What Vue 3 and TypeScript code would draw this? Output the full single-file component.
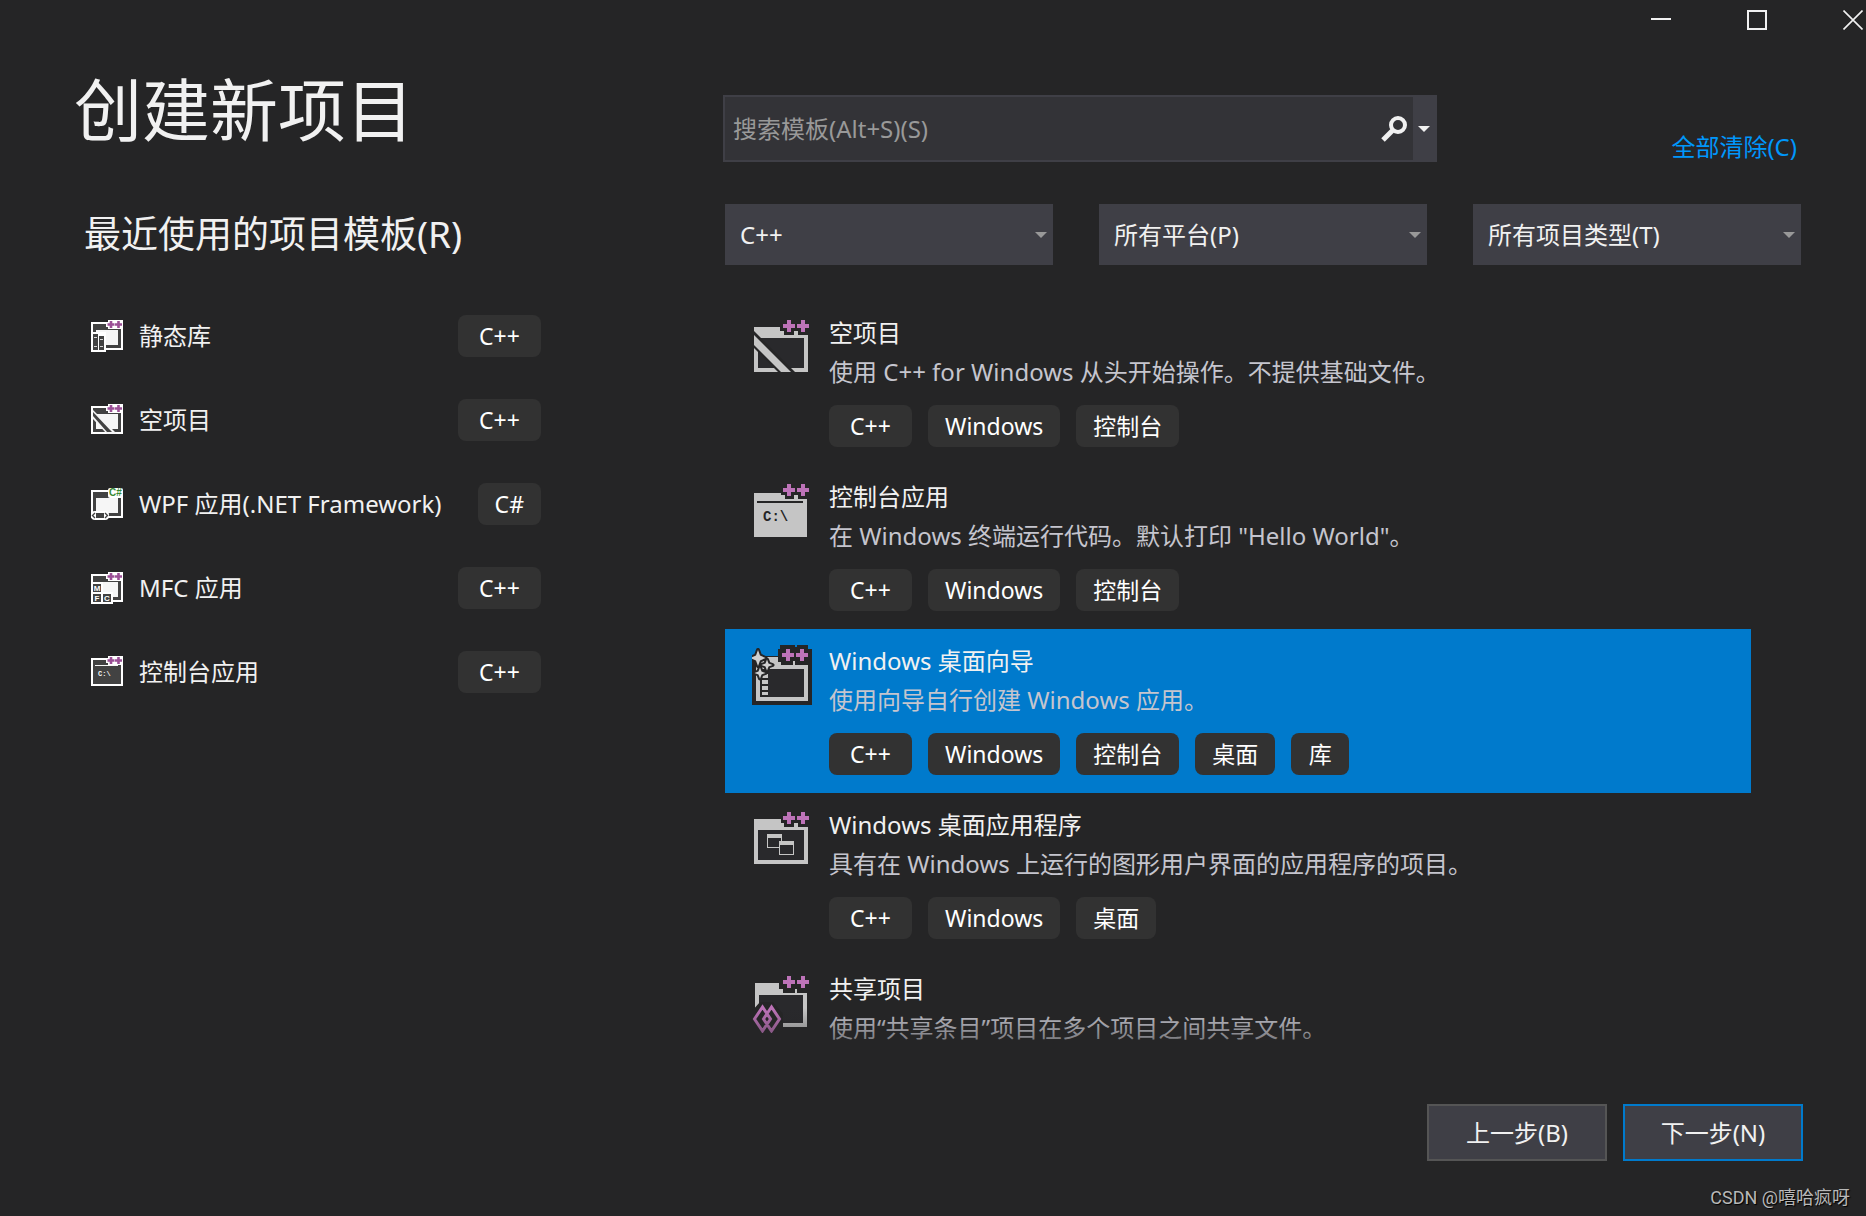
<script setup lang="ts">
import { ref } from 'vue'

interface RecentTemplate {
  name: string
  tag: string
  icon: 'library' | 'empty' | 'wpf' | 'mfc' | 'console'
}

interface ProjectTemplate {
  name: string
  description: string
  tags: string[]
  icon: 'empty' | 'console' | 'wizard' | 'desktop' | 'shared'
}

const recent: RecentTemplate[] = [
  { name: '静态库', tag: 'C++', icon: 'library' },
  { name: '空项目', tag: 'C++', icon: 'empty' },
  { name: 'WPF 应用(.NET Framework)', tag: 'C#', icon: 'wpf' },
  { name: 'MFC 应用', tag: 'C++', icon: 'mfc' },
  { name: '控制台应用', tag: 'C++', icon: 'console' },
]

const templates: ProjectTemplate[] = [
  { name: '空项目', description: '使用 C++ for Windows 从头开始操作。不提供基础文件。', tags: ['C++', 'Windows', '控制台'], icon: 'empty' },
  { name: '控制台应用', description: '在 Windows 终端运行代码。默认打印 "Hello World"。', tags: ['C++', 'Windows', '控制台'], icon: 'console' },
  { name: 'Windows 桌面向导', description: '使用向导自行创建 Windows 应用。', tags: ['C++', 'Windows', '控制台', '桌面', '库'], icon: 'wizard' },
  { name: 'Windows 桌面应用程序', description: '具有在 Windows 上运行的图形用户界面的应用程序的项目。', tags: ['C++', 'Windows', '桌面'], icon: 'desktop' },
  { name: '共享项目', description: '使用“共享条目”项目在多个项目之间共享文件。', tags: [], icon: 'shared' },
]

const filters = [
  { id: 'language', label: '语言', value: 'C++' },
  { id: 'platform', label: '平台', value: '所有平台(P)' },
  { id: 'type', label: '项目类型', value: '所有项目类型(T)' },
]

const selected = ref(2)
const query = ref('')
</script>

<template>
  <div class="window">
    <header class="titlebar">
      <button type="button" aria-label="最小化">
        <svg width="20" height="20" viewBox="0 0 20 20"><path d="M0 9H20" stroke="#f1f1f1" stroke-width="2" /></svg>
      </button>
      <button type="button" aria-label="最大化">
        <svg width="20" height="20" viewBox="0 0 20 20"><rect x="1" y="1" width="18" height="18" fill="none" stroke="#f1f1f1" stroke-width="2" /></svg>
      </button>
      <button type="button" aria-label="关闭">
        <svg width="20" height="20" viewBox="0 0 20 20"><path d="M0.5 0.5L19.5 19.5M19.5 0.5L0.5 19.5" stroke="#f1f1f1" stroke-width="1.6" /></svg>
      </button>
    </header>

    <main class="content">
      <section class="recent">
        <h1>创建新项目</h1>
        <h2>最近使用的项目模板(R)</h2>
        <ul class="recent-list">
          <li v-for="item in recent" :key="item.name">
            <button type="button" class="recent-item">
              <svg class="small-icon" viewBox="0 0 32 32" aria-hidden="true">
                <g shape-rendering="crispEdges">
                  <rect x="0" y="2" width="32" height="28" fill="#fff" />
                  <rect x="2" y="4" width="28" height="24" fill="#424242" />
                  <rect v-if="item.icon !== 'console'" x="5" y="10" width="22" height="15" fill="#f6f6f6" />
                </g>
                <g v-if="item.icon === 'library'" shape-rendering="crispEdges">
                  <rect x="0" y="12" width="15" height="20" fill="#fff" />
                  <rect x="2" y="14" width="5" height="16" fill="#424242" />
                  <rect x="8" y="16" width="5" height="14" fill="#424242" />
                  <path d="M3 17H6M9 19H12M3 26H6M9 26H12" stroke="#d8d8d8" />
                </g>
                <g v-else-if="item.icon === 'empty'">
                  <path d="M2 6L26 30H16L2 15Z" fill="#f6f6f6" />
                  <path d="M2 8L21 28H16L2 12Z" fill="#424242" />
                </g>
                <g v-else-if="item.icon === 'wpf'">
                  <rect x="0" y="23" width="18" height="9" rx="4" fill="#fff" />
                  <rect x="5" y="25" width="8" height="5" fill="#424242" />
                  <path d="M4 25L1.5 27.5L4 30M14 25L16.5 27.5L14 30" fill="none" stroke="#424242" stroke-width="1.4" />
                </g>
                <g v-else-if="item.icon === 'mfc'">
                  <path d="M0 10H12V20H22V32H0Z" fill="#fff" shape-rendering="crispEdges" />
                  <path d="M2 12H10V20H2ZM2 22H10V30H2ZM12 22H20V30H12Z" fill="#424242" />
                  <g class="icon-letters" fill="#fff" font-size="8">
                    <text x="6" y="19">M</text><text x="6" y="29">F</text><text x="16" y="29">C</text>
                  </g>
                </g>
                <g v-else>
                  <path d="M4 9.5H27" stroke="#f6f6f6" />
                  <text class="icon-prompt" x="7" y="20" fill="#f6f6f6" font-size="7">C:\</text>
                </g>
                <template v-if="item.icon === 'wpf'">
                  <rect x="17" y="0" width="15" height="10" rx="2" fill="#fff" />
                  <text class="icon-letters" x="24.5" y="8" fill="#388a34" font-size="10">C#</text>
                </template>
                <template v-else>
                  <path d="M17 0H32V9H17V7H15V2H17Z" fill="#fff" />
                  <path d="M20 1V8M16.5 4.5H23.5M27.5 1V8M24 4.5H31" stroke="#9b4f96" stroke-width="2.6" />
                </template>
              </svg>
              <span class="recent-name">{{ item.name }}</span>
              <span class="tag" :class="{ cpp: item.tag === 'C++' }">{{ item.tag }}</span>
            </button>
          </li>
        </ul>
      </section>

      <section class="browse">
        <div class="search-row">
          <div class="search">
            <input v-model="query" type="text" aria-label="搜索模板" placeholder="搜索模板(Alt+S)(S)" />
            <button type="button" class="search-go" aria-label="搜索">
              <svg width="26" height="26" viewBox="0 0 26 26"><circle cx="17" cy="9" r="7" fill="none" stroke="#f1f1f1" stroke-width="4" /><path d="M12 14L2 24" stroke="#f1f1f1" stroke-width="5" /></svg>
            </button>
            <button type="button" class="search-more" aria-label="搜索选项">
              <svg width="12" height="6" viewBox="0 0 12 6"><path d="M0 0H12L6 6Z" fill="#f1f1f1" /></svg>
            </button>
          </div>
          <a href="#" class="clear">全部清除(C)</a>
        </div>

        <div class="filters">
          <div v-for="filter in filters" :key="filter.id" class="filter">
            <select :id="filter.id" :aria-label="filter.label">
              <option>{{ filter.value }}</option>
            </select>
            <svg width="12" height="6" viewBox="0 0 12 6" aria-hidden="true"><path d="M0 0H12L6 6Z" fill="#999" /></svg>
          </div>
        </div>

        <ul class="templates" role="listbox" aria-label="项目模板">
          <li
            v-for="(item, index) in templates"
            :key="item.name"
            class="template"
            :class="{ selected: index === selected }"
            role="option"
            :aria-selected="index === selected"
            @click="selected = index"
          >
            <svg class="large-icon" viewBox="0 0 60 60" aria-hidden="true">
              <g v-if="item.icon === 'empty'">
                <path d="M2 10H28V14H32V18H42V14H46V18H56V55H2Z" fill="#c5c5c5" />
                <path d="M6 21H52V51H6Z" fill="#29292c" />
                <path d="M2 14L43 55H26L2 31Z" fill="#252526" />
                <path d="M2 18L39 55H29L2 28Z" fill="#c5c5c5" />
              </g>
              <g v-else-if="item.icon === 'console'">
                <path d="M2 12H29V14H33V18H42V14H46V18H55V56H2Z" fill="#c5c5c5" />
                <path d="M5 21H51" stroke="#252526" stroke-width="2" />
                <text class="icon-prompt" x="11" y="40" fill="#252526" font-size="14">C:\</text>
              </g>
              <g v-else-if="item.icon === 'wizard'">
                <path d="M0 11H26V4H28V0H43V2H45V0H56V4H60V60H0Z" fill="#252526" />
                <path d="M4 12H26V17H29V20H41V16H43V20H56V56H4Z" fill="#c5c5c5" />
                <path d="M8 24H52V52H8Z" fill="#252526" />
                <path d="M16 24H52V52H16Z" fill="#29292c" />
                <path d="M10 29H16V33H10ZM10 35H16V39H10ZM10 41H16V45H10ZM10 47H16V50H10Z" fill="#c5c5c5" />
                <path
                  d="M6 5L8 10.5L13.5 13L8 15.5L6 21L4 15.5L-1.5 13L4 10.5ZM15 14.5L16.5 18.5L20.5 20L16.5 21.5L15 25.5L13.5 21.5L9.5 20L13.5 18.5ZM8 22.5L9.5 26.5L13.5 28L9.5 29.5L8 33.5L6.5 29.5L2.5 28L6.5 26.5Z"
                  fill="#d0d0d0"
                  stroke="#252526"
                  stroke-width="4"
                  stroke-linejoin="round"
                  paint-order="stroke"
                />
              </g>
              <g v-else-if="item.icon === 'desktop'">
                <path d="M2 10H29V14H32V18H42V14H46V18H56V55H2Z" fill="#c5c5c5" />
                <path d="M6 21H52V51H6Z" fill="#29292c" />
                <path d="M15 25H30V39H15ZM16 29V38H29V29Z" fill="#c5c5c5" fill-rule="evenodd" />
                <path d="M27 32H42V46H27Z" fill="#c5c5c5" />
                <path d="M28 36H41V45H28Z" fill="#29292c" />
              </g>
              <g v-else>
                <path d="M3 10H27V16H31V20H43V16H45V20H55V54H3Z" fill="#c5c5c5" />
                <path d="M7 22H51V50H7Z" fill="#29292c" />
                <path d="M0 38L8 29H21L31 41V54H27V60H0Z" fill="#252526" />
                <path
                  d="M10.5 34L2.5 46L10.5 58L18.5 46ZM19.5 34L11.5 46L19.5 58L27.5 46Z"
                  fill="none"
                  stroke="#bd73b8"
                  stroke-width="3"
                />
              </g>
              <path
                v-if="item.icon === 'wizard'"
                d="M36 4V16M30 10H42M50 4V16M44 10H56"
                stroke="#bd73b8"
                stroke-width="4"
              />
              <path v-else d="M37 3V15M31 9H43M51 3V15M45 9H57" stroke="#bd73b8" stroke-width="4" />
            </svg>
            <div class="template-body">
              <h3>{{ item.name }}</h3>
              <p>{{ item.description }}</p>
              <div class="tags">
                <span v-for="tag in item.tags" :key="tag" class="tag" :class="{ cpp: tag === 'C++' }">{{ tag }}</span>
              </div>
            </div>
          </li>
        </ul>
      </section>
    </main>

    <footer class="actions">
      <button type="button">上一步(B)</button>
      <button type="button" class="primary">下一步(N)</button>
    </footer>
    <p class="credit">CSDN @嘻哈疯呀</p>
  </div>
</template>

<style>
body {
  background: #252526;
}
</style>

<style scoped>
* {
  box-sizing: border-box;
}

.window {
  display: flex;
  flex-direction: column;
  height: 100vh;
  overflow: hidden;
  background: #252526;
  color: #f1f1f1;
  font-family: "Noto Sans", "Noto Sans CJK SC", sans-serif;
  font-size: 24px;
  line-height: 32px;
}

h1,
h2,
h3,
p,
ul {
  margin: 0;
  padding: 0;
  font-weight: 400;
  list-style: none;
}

button,
input,
select {
  margin: 0;
  padding: 0;
  border: 0;
  border-radius: 0;
  background: none;
  color: inherit;
  font: inherit;
}

svg {
  display: block;
  flex: none;
}

.titlebar {
  display: flex;
  flex: none;
  justify-content: flex-end;
  gap: 76px;
  height: 40px;
  padding: 10px 3px 10px 0;
}

.content {
  display: grid;
  flex: 1;
  grid-template-columns: 723px minmax(0, 1fr);
  min-height: 0;
}

.recent {
  padding: 30px 182px 0 74px;
}

h1 {
  font-size: 68px;
  line-height: 80px;
}

h2 {
  margin: 60px 0 57px 10px;
  font-size: 37px;
  line-height: 48px;
  white-space: nowrap;
}

.recent-list {
  display: flex;
  flex-direction: column;
  gap: 42px;
  padding-left: 17px;
}

.recent-item {
  display: flex;
  align-items: center;
  width: 100%;
  height: 42px;
  text-align: left;
  white-space: nowrap;
}

.small-icon {
  width: 32px;
  height: 32px;
}

.recent-name {
  flex: 1;
  margin-left: 16px;
}

.icon-letters {
  font-family: "Liberation Sans", sans-serif;
  font-weight: 700;
  text-anchor: middle;
}

.icon-prompt {
  font-family: "Liberation Mono", monospace;
  font-weight: 700;
}

.tag {
  min-width: 58px;
  height: 42px;
  padding: 0 17px;
  border-radius: 8px;
  background: #323232;
  color: #fff;
  font-size: 23px;
  line-height: 42px;
  text-align: center;
  white-space: nowrap;
}

.tag.cpp {
  min-width: 83px;
}

.browse {
  display: flex;
  flex-direction: column;
  min-height: 0;
  padding: 55px 65px 0 0;
}

.search-row {
  display: flex;
  flex: none;
  justify-content: space-between;
  height: 67px;
}

.search {
  display: flex;
  width: 714px;
  border: 2px solid #3f3f46;
  background: #333337;
}

.search input {
  flex: 1;
  min-width: 0;
  padding-left: 8px;
  outline: 0;
}

.search input::placeholder {
  color: #999;
  opacity: 1;
}

.search-go {
  display: flex;
  align-items: center;
  width: 32px;
}

.search-more {
  display: flex;
  align-items: center;
  justify-content: center;
  width: 22px;
  background: #3f3f46;
}

.clear {
  align-self: flex-end;
  margin-right: 4px;
  color: #0097fb;
  line-height: 30px;
  text-decoration: none;
}

.filters {
  display: flex;
  flex: none;
  gap: 46px;
  margin: 42px 0 36px 2px;
}

.filter {
  display: grid;
  flex: 1;
  align-items: center;
  height: 61px;
  background: #3f3f46;
}

.filter select,
.filter svg {
  grid-area: 1 / 1;
}

.filter select {
  width: 100%;
  height: 61px;
  padding: 0 32px 0 15px;
  appearance: none;
}

.filter svg {
  justify-self: end;
  margin-right: 6px;
  pointer-events: none;
}

.templates {
  position: relative;
  flex: 1;
  min-height: 0;
  margin: 0 50px 0 2px;
  overflow: hidden;
}

.templates::after {
  position: absolute;
  right: 0;
  bottom: 0;
  left: 0;
  height: 56px;
  background: linear-gradient(#25252600, #252526cc);
  content: "";
}

.template {
  display: flex;
  gap: 17px;
  height: 164px;
  padding: 16px 0 0 27px;
}

.template.selected {
  background: #007acc;
}

.large-icon {
  width: 60px;
  height: 60px;
}

.template h3 {
  font-size: 24px;
  line-height: 32px;
}

.template p {
  margin-top: 7px;
  color: #c5c5ce;
  white-space: nowrap;
}

.tags {
  display: flex;
  gap: 16px;
  margin-top: 17px;
}

.actions {
  display: flex;
  flex: none;
  justify-content: flex-end;
  gap: 16px;
  padding: 40px 63px 0 0;
}

.actions button {
  width: 180px;
  height: 57px;
  border: 2px solid #555;
  background: #3f3f46;
}

.actions .primary {
  border-color: #007acc;
}

.credit {
  flex: none;
  margin: 25px 16px 6px 0;
  color: #b8b8b8;
  font-family: Roboto, "Noto Sans CJK SC", sans-serif;
  font-size: 18px;
  line-height: 24px;
  text-align: right;
  text-shadow: 1px 1px 1px #000;
}
</style>
